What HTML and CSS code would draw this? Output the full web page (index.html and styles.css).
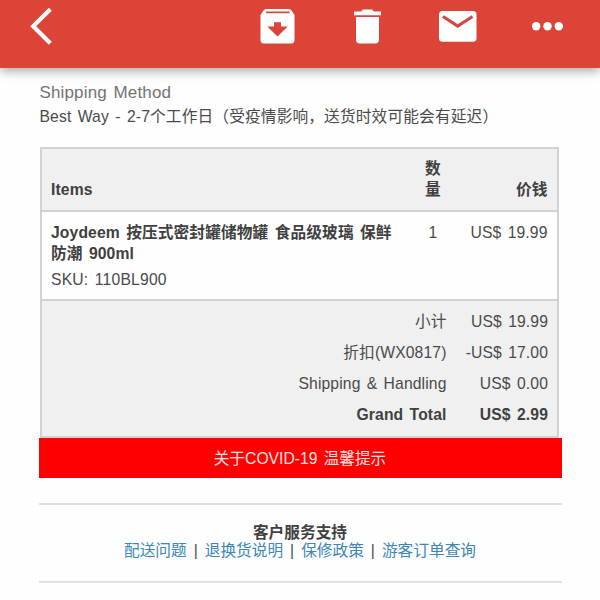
FILE: index.html
```html
<!DOCTYPE html>
<html lang="zh-CN">
<head>
<meta charset="utf-8">
<title>Order</title>
<link rel="stylesheet" href="styles.css">
</head>
<body>
<header class="toolbar">
  <svg class="icons" width="600" height="67" viewBox="0 0 600 67" fill="#fff">
    <path d="M50.3 9.300 33.200 26.200l17.100 17" fill="none" stroke="#fff" stroke-width="4.200"/>
    <path fill-rule="evenodd" d="M266 9h23q1.500 0 2.500 1.500L294.500 15V40q0 3.500-3.500 3.500h-27q-3.500 0-3.500-3.500V15l3-4.500Q264.500 9 266 9ZM265.500 13.200h24.500l-1-1.800h-22.500ZM274 22.300v4.200h-6.700l10.200 10 10.200-10H281v-4.200Z"/>
    <path d="M354 11.500h7l2-2h9l2 2h7v3.700h-27ZM356 17h23v22.500q0 4-4 4h-15q-4 0-4-4Z"/>
    <rect x="439" y="11" width="37.500" height="30.800" rx="3.500"/>
    <path d="M443 16.500 457.700 26 472.500 16.500" fill="none" stroke="#cf4a40" stroke-width="3.200"/>
    <circle cx="536.200" cy="26.200" r="4.200"/><circle cx="547.500" cy="26.200" r="4.200"/><circle cx="558.800" cy="26.200" r="4.200"/>
  </svg>
</header>
<main class="mail">
  <h2 class="method">Shipping Method</h2>
  <p class="way">Best Way - 2-7个工作日（受疫情影响，送货时效可能会有延迟）</p>
  <section class="order">
    <div class="row head">
      <div>Items</div><div class="qty">数<br>量</div><div class="price">价钱</div>
    </div>
    <div class="row item">
      <div><div class="name">Joydeem 按压式密封罐储物罐 食品级玻璃 保鲜<br>防潮 900ml</div><div class="sku">SKU: 110BL900</div></div>
      <div class="qty">1</div><div class="price">US$ 19.99</div>
    </div>
    <div class="totals">
      <div>小计</div><div>US$ 19.99</div>
      <div>折扣(WX0817)</div><div>-US$ 17.00</div>
      <div>Shipping &amp; Handling</div><div>US$ 0.00</div>
      <div class="grand">Grand Total</div><div class="grand">US$ 2.99</div>
    </div>
  </section>
  <div class="notice">关于COVID-19 温馨提示</div>
  <footer class="support">
    <div class="support-title">客户服务支持</div>
    <nav class="links"><a>配送问题</a><i>|</i><a>退换货说明</a><i>|</i><a>保修政策</a><i>|</i><a>游客订单查询</a></nav>
  </footer>
</main>
</body>
</html>
```
FILE: styles.css
```css
* { box-sizing: border-box; }
body {
  margin: 0;
  height: 600px;
  overflow: hidden;
  background: #fefefe;
  color: #4a4a4a;
  font: 15.7px/21px "Liberation Sans", "Noto Sans CJK SC", sans-serif;
  word-spacing: 1.800px;
}
.toolbar {
  height: 67.500px;
  background: #db4437;
  box-shadow: 0 3px 10px 0 rgba(0, 0, 0, .35);
}
.icons { display: block; }
.mail { width: 523px; margin-left: 38.500px; }
.method {
  margin: 0;
  padding: 14px 0 0 1px;
  font-size: 17px;
  line-height: 22px;
  font-weight: 400;
  letter-spacing: .150px;
  color: #737373;
}
.way { margin: 0; padding: 2px 0 0 1px; line-height: 22px; letter-spacing: .140px; white-space: nowrap; }
.order {
  width: 519px;
  height: 291px;
  margin: 19px 0 0 1.500px;
  border: 2px solid #d2d2d2;
  background: #f0f0f0;
  letter-spacing: .120px;
}
.row {
  display: grid;
  grid-template-columns: 360px 44px 92.500px;
  padding-left: 9px;
  border-bottom: 2px solid #d2d2d2;
}
.head { height: 63px; align-items: end; padding-bottom: 10px; font-weight: 700; color: #404040; }
.item { height: 89px; padding-top: 10px; background: #fefefe; }
.qty { text-align: center; }
.price { text-align: right; }
.name { font-weight: 700; color: #404040; white-space: nowrap; }
.sku { margin-top: 5px; letter-spacing: .200px; }
.totals {
  display: grid;
  grid-template-columns: 404.500px 101.500px;
  grid-auto-rows: 31px;
  padding-top: 5px;
  line-height: 31px;
  text-align: right;
}
.grand { font-weight: 700; color: #404040; }
.notice {
  height: 40.500px;
  background: #f00;
  color: #ffe0e0;
  line-height: 41px;
  text-align: center;
}
.support {
  height: 80px;
  margin-top: 24.500px;
  padding-top: 19px;
  border: solid #e0e0e0;
  border-width: 2px 0;
  line-height: 18px;
  text-align: center;
}
.support-title { font-weight: 700; color: #404040; }
.links { display: flex; justify-content: center; }
.links a { color: #3c86b8; }
.links i { width: 18px; font-style: normal; }
```
